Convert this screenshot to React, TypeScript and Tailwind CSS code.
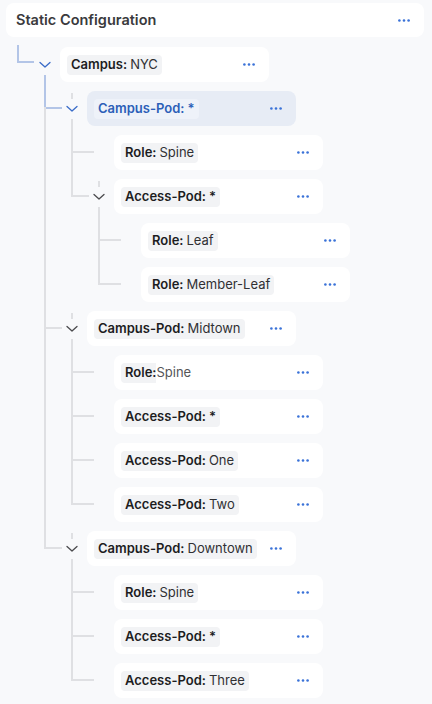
import clsx from "clsx";

type TreeNode = {
  label: string;
  value: string;
  onPath?: boolean;
  selected?: boolean;
  loose?: boolean;
  children?: TreeNode[];
};

const tree: TreeNode = {
  label: "Campus",
  value: "NYC",
  onPath: true,
  children: [
    {
      label: "Campus-Pod",
      value: "*",
      selected: true,
      children: [
        { label: "Role", value: "Spine" },
        {
          label: "Access-Pod",
          value: "*",
          children: [
            { label: "Role", value: "Leaf" },
            { label: "Role", value: "Member-Leaf" },
          ],
        },
      ],
    },
    {
      label: "Campus-Pod",
      value: "Midtown",
      children: [
        { label: "Role", value: "Spine", loose: true },
        { label: "Access-Pod", value: "*" },
        { label: "Access-Pod", value: "One" },
        { label: "Access-Pod", value: "Two" },
      ],
    },
    {
      label: "Campus-Pod",
      value: "Downtown",
      children: [
        { label: "Role", value: "Spine" },
        { label: "Access-Pod", value: "*" },
        { label: "Access-Pod", value: "Three" },
      ],
    },
  ],
};

function Dots() {
  return (
    <svg width="12" height="3" viewBox="0 0 12 3" className="fill-[#3a72d8]">
      <circle cx="1.4" cy="1.5" r="1.3" />
      <circle cx="6" cy="1.5" r="1.3" />
      <circle cx="10.6" cy="1.5" r="1.3" />
    </svg>
  );
}

function Chevron({ active }: { active?: boolean }) {
  return (
    <svg
      width="12"
      height="7"
      viewBox="0 0 12 7"
      fill="none"
      className={active ? "stroke-[#3a6cc8]" : "stroke-[#4a4a4d]"}
      strokeWidth="1.3"
      strokeLinecap="round"
      strokeLinejoin="round"
    >
      <path d="M1 1.5l5 4.5 5-4.5" />
    </svg>
  );
}

function Card({ node }: { node: TreeNode }) {
  const sel = node.selected;
  return (
    <div
      className={clsx(
        "flex h-[35px] w-[209px] items-center justify-between rounded-lg pl-[7px] pr-[14px]",
        sel ? "bg-[#e7ecf5]" : "bg-white"
      )}
    >
      {node.loose ? (
        <div className="flex items-center text-[13px]">
          <span className="flex h-[20px] items-center rounded-l bg-[#f2f3f5] pl-1 font-semibold text-[#1d1d1f]">
            {node.label}:
          </span>
          <span className="text-[#555558]">{node.value}</span>
        </div>
      ) : (
        <div
          className={clsx(
            "flex h-[20px] items-center gap-[3px] rounded px-1 text-[13px]",
            sel ? "bg-[#eef2f9] text-[#2c5fb8]" : "bg-[#f2f3f5] text-[#1d1d1f]"
          )}
        >
          <span className="font-semibold">{node.label}:</span>
          <span
            className={clsx(
              node.value === "*" ? "font-semibold" : "font-normal",
              !sel && node.value !== "*" && "text-[#303033]"
            )}
          >
            {node.value}
          </span>
        </div>
      )}
      <Dots />
    </div>
  );
}

function Node({
  node,
  isLast,
  isRoot,
}: {
  node: TreeNode;
  isLast: boolean;
  isRoot?: boolean;
}) {
  const kids = node.children ?? [];
  const expandable = kids.length > 0;
  const blueUp = node.onPath || node.selected;
  const blueIn = node.onPath && !node.selected;
  const up = blueUp ? "bg-[#b3c5e7]" : "bg-[#dfe0e3]";

  return (
    <div className="relative">
      <span
        className={clsx(
          "absolute left-[-12.75px] w-[1.5px]",
          isRoot ? "top-[-2px] h-[17.5px]" : "top-[-9px] h-[26.5px]",
          up
        )}
      />
      <span
        className={clsx(
          "absolute left-[-12.75px] h-[1.5px]",
          isRoot ? "top-[14px] w-[17px]" : "top-[16px]",
          !isRoot && (expandable ? "w-[19px]" : "w-[23px]"),
          up
        )}
      />
      {!isLast && (
        <span className="absolute left-[-12.75px] top-[16px] bottom-0 w-[1.5px] bg-[#dfe0e3]" />
      )}

      <div className="relative flex h-[35px] items-center">
        {expandable && (
          <span
            className={clsx(
              "absolute left-[14.25px] bottom-0 w-[1.5px]",
              isRoot ? "top-[20px]" : "top-[2px]",
              blueIn ? "bg-[#b3c5e7]" : "bg-[#dfe0e3]"
            )}
          />
        )}
        <div className="relative flex w-[30px] justify-center">
          {expandable && (
            <span className="flex h-5 w-5 items-center justify-center bg-[#f8f9fb]">
              <Chevron active={node.onPath || node.selected} />
            </span>
          )}
        </div>
        <Card node={node} />
      </div>

      {expandable && (
        <div className="mt-[9px] flex flex-col gap-[9px] pl-[27px]">
          {kids.map((child, i) => (
            <Node key={i} node={child} isLast={i === kids.length - 1} />
          ))}
        </div>
      )}
    </div>
  );
}

export default function App() {
  return (
    <div className="h-[704px] w-[432px] overflow-hidden bg-[#f8f9fb] font-['Inter',sans-serif] antialiased">
      <div className="ml-[6px] mt-[3px] flex h-[34px] w-[418px] items-center justify-between rounded-lg bg-white pl-[10px] pr-[14px]">
        <h1 className="text-[14.5px] font-semibold text-[#3a3a3d]">Static Configuration</h1>
        <Dots />
      </div>
      <div className="mt-[10px] pl-[30px]">
        <Node node={tree} isLast isRoot />
      </div>
    </div>
  );
}
